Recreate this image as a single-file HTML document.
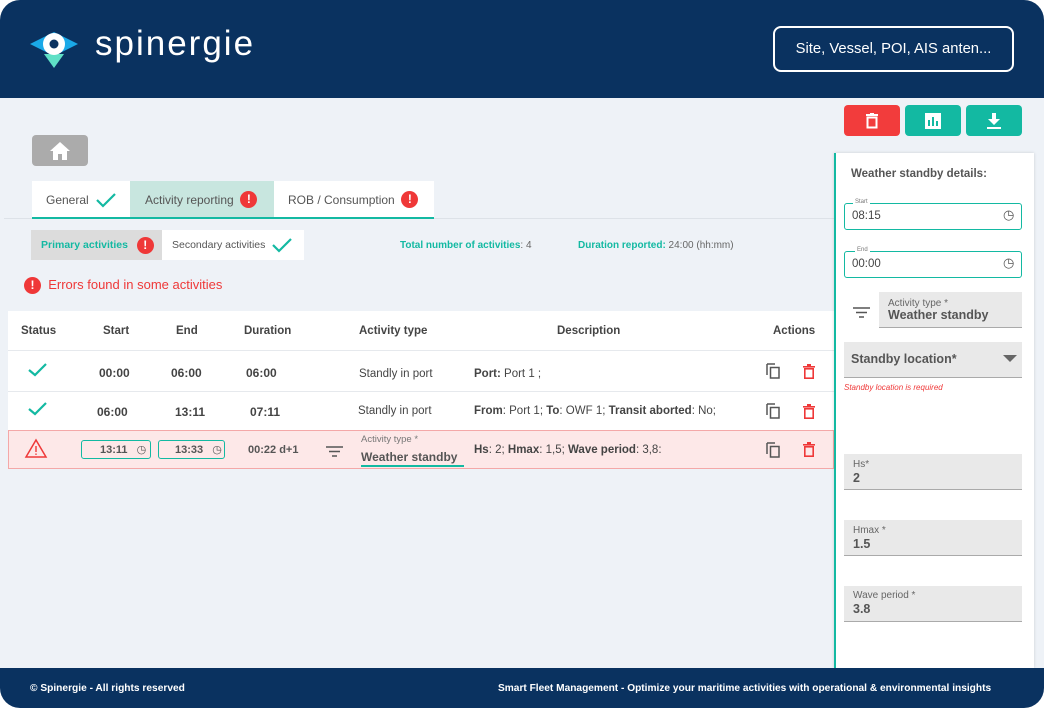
<!DOCTYPE html>
<html><head><meta charset="utf-8">
<style>
*{box-sizing:border-box;margin:0;padding:0}
body{width:1044px;height:708px;background:#fff;font-family:"Liberation Sans",sans-serif;position:relative;overflow:hidden}
.page{position:absolute;left:0;top:0;width:1044px;height:708px;background:#eef2f7;border-radius:20px;overflow:hidden}
.abs{position:absolute}
.hdr{left:0;top:0;width:1044px;height:98px;background:#0a3260}
.ftr{left:0;top:668px;width:1044px;height:40px;background:#0a3260;color:#fff;font-size:10px;font-weight:bold}
.btn{height:31px;border-radius:4px;display:flex;align-items:center;justify-content:center}
.err{display:inline-block;width:17px;height:17px;border-radius:50%;background:#ef3838;color:#fff;font-weight:bold;font-size:12px;text-align:center;line-height:17px;vertical-align:middle}
.ck{display:inline-block;vertical-align:middle}
.tab{top:181px;height:37px;display:flex;align-items:center;font-size:12px;color:#555}
.th{font-size:11.5px;font-weight:bold;color:#444;top:325px}
.c{font-size:12px;color:#444;font-weight:bold}
.n{font-size:11.5px;color:#444}
.field{background:#e9e9e9;border-bottom:1px solid #aaa}
.lbl{font-size:10px;color:#666}
.val{font-size:12.5px;color:#555;font-weight:bold}
</style></head><body>
<div class="page">
<div class="abs hdr">
 <svg class="abs" style="left:28px;top:28px" width="52" height="42" viewBox="0 0 52 42">
  <path d="M2 16 L26 4 L50 16 L26 28 Z" fill="#1aa9e8"/>
  <path d="M16 26 L26 40 L36 26 Z" fill="#5fe0c6"/>
  <circle cx="26" cy="16" r="11" fill="#fff"/>
  <circle cx="26" cy="16" r="4.5" fill="#0a3260"/>
 </svg>
 <div class="abs" style="left:95px;top:24px;color:#fff;font-size:35px;letter-spacing:2px">spinergie</div>
 <div class="abs" style="left:773px;top:26px;width:241px;height:46px;border:2px solid #fff;border-radius:8px;color:#fff;font-size:14.8px;display:flex;align-items:center;justify-content:center">Site, Vessel, POI, AIS anten...</div>
</div>

<div class="abs btn" style="left:844px;top:105px;width:56px;background:#f23c3c"><svg width="14" height="16" viewBox="0 0 14 16"><rect x="1" y="1" width="12" height="2" fill="#fff"/><rect x="5" y="0" width="4" height="2" fill="#fff"/><rect x="2.5" y="4.5" width="9" height="10" fill="none" stroke="#fff" stroke-width="2"/></svg></div>
<div class="abs btn" style="left:905px;top:105px;width:56px;background:#13b9a2"><svg width="16" height="16" viewBox="0 0 16 16"><rect width="16" height="16" fill="#fff"/><rect x="3" y="7" width="2" height="6" fill="#13b9a2"/><rect x="7" y="4" width="2" height="9" fill="#13b9a2"/><rect x="11" y="8" width="2" height="5" fill="#13b9a2"/></svg></div>
<div class="abs btn" style="left:966px;top:105px;width:56px;background:#13b9a2"><svg width="14" height="16" viewBox="0 0 14 16"><path d="M5 0h4v6h4l-6 6-6-6h4z" fill="#fff"/><rect x="0" y="14" width="14" height="2" fill="#fff"/></svg></div>

<div class="abs" style="left:32px;top:135px;width:56px;height:31px;background:#ababab;border-radius:4px;display:flex;align-items:center;justify-content:center">
 <svg width="22" height="20" viewBox="0 0 22 20"><path d="M11 1 L21 10 H18 V19 H13 V13 H9 V19 H4 V10 H1 Z" fill="#fff"/></svg></div>

<div class="abs" style="left:4px;top:218px;width:830px;height:1px;background:#dde2e8"></div>
<div class="abs tab" style="left:32px;width:98px;background:#fff;padding-left:14px">General&nbsp;&nbsp;<svg class="ck" width="22" height="16"><path d="M2 8 L8 14 L20 2" stroke="#13b9a2" stroke-width="2.2" fill="none"/></svg></div>
<div class="abs tab" style="left:130px;width:144px;background:#c8e6df;padding-left:15px">Activity reporting&nbsp;&nbsp;<span class="err">!</span></div>
<div class="abs tab" style="left:274px;width:160px;background:#fff;padding-left:14px">ROB / Consumption&nbsp;&nbsp;<span class="err">!</span></div>
<div class="abs" style="left:32px;top:217px;width:402px;height:2px;background:#13b9a2"></div>

<div class="abs" style="left:31px;top:230px;width:131px;height:30px;background:#dcdcdc;display:flex;align-items:center;padding-left:10px;font-size:10.5px;font-weight:bold;color:#13b9a2">Primary activities&nbsp;&nbsp;&nbsp;<span class="err">!</span></div>
<div class="abs" style="left:162px;top:230px;width:142px;height:30px;background:#fff;display:flex;align-items:center;padding-left:10px;font-size:10.5px;color:#555">Secondary activities&nbsp;&nbsp;<svg class="ck" width="22" height="16"><path d="M2 8 L8 14 L20 2" stroke="#13b9a2" stroke-width="2.2" fill="none"/></svg></div>
<div class="abs" style="left:400px;top:240px;font-size:10px;color:#666"><b style="color:#13b9a2">Total number of activities</b>: 4</div>
<div class="abs" style="left:578px;top:240px;font-size:10px;color:#666"><b style="color:#13b9a2">Duration reported:</b> 24:00 (hh:mm)</div>
<div class="abs" style="left:24px;top:277px;font-size:13px;color:#ef3838"><span class="err">!</span>&nbsp;&nbsp;Errors found in some activities</div>

<div class="abs" style="left:8px;top:311px;width:826px;height:120px;background:#fff"></div>
<div class="abs" style="left:8px;top:350px;width:826px;height:1px;background:#e6e9ed"></div>
<div class="abs" style="left:8px;top:391px;width:826px;height:1px;background:#e6e9ed"></div>
<div class="abs" style="left:8px;top:430px;width:826px;height:39px;background:#fde8e8;border:1px solid #f4a8a8"></div>
<div class="abs th" style="left:21px">Status</div>
<div class="abs th" style="left:103px">Start</div>
<div class="abs th" style="left:176px">End</div>
<div class="abs th" style="left:244px">Duration</div>
<div class="abs th" style="left:359px">Activity type</div>
<div class="abs th" style="left:557px">Description</div>
<div class="abs th" style="left:773px">Actions</div>

<svg class="abs" style="left:28px;top:363px" width="20" height="14"><path d="M1 7 L7 12 L18 1" stroke="#13b9a2" stroke-width="2.2" fill="none"/></svg>
<div class="abs c" style="left:99px;top:366px">00:00</div>
<div class="abs c" style="left:171px;top:366px">06:00</div>
<div class="abs c" style="left:246px;top:366px">06:00</div>
<div class="abs n" style="left:359px;top:368px">Standly in port</div>
<div class="abs n" style="left:474px;top:368px"><b>Port:</b> Port 1 ;</div>

<svg class="abs" style="left:28px;top:402px" width="20" height="14"><path d="M1 7 L7 12 L18 1" stroke="#13b9a2" stroke-width="2.2" fill="none"/></svg>
<div class="abs c" style="left:97px;top:405px">06:00</div>
<div class="abs c" style="left:175px;top:405px">13:11</div>
<div class="abs c" style="left:250px;top:405px">07:11</div>
<div class="abs n" style="left:358px;top:405px">Standly in port</div>
<div class="abs n" style="left:474px;top:405px"><b>From</b>: Port 1; <b>To</b>: OWF 1; <b>Transit aborted</b>: No;</div>

<svg class="abs" style="left:24px;top:438px" width="24" height="21"><path d="M12 2 L22 19 H2 Z" stroke="#ef3838" stroke-width="1.5" fill="none"/><rect x="11.3" y="8" width="1.4" height="6" fill="#ef3838"/><rect x="11.3" y="15.5" width="1.4" height="1.4" fill="#ef3838"/></svg>
<div class="abs" style="left:81px;top:440px;width:70px;height:19px;border:1px solid #13b9a2;border-radius:3px;font-size:11px;font-weight:bold;color:#555;padding:2px 0 0 18px">13:11 <span style="font-weight:normal;margin-left:6px">◷</span></div>
<div class="abs" style="left:158px;top:440px;width:67px;height:19px;border:1px solid #13b9a2;border-radius:3px;font-size:11px;font-weight:bold;color:#555;padding:2px 0 0 16px">13:33 <span style="font-weight:normal;margin-left:6px">◷</span></div>
<div class="abs" style="left:248px;top:444px;font-size:11px;font-weight:bold;color:#555">00:22 d+1</div>
<svg class="abs" style="left:326px;top:446px" width="18" height="12"><path d="M0 1H17M3 5.5H14M6 10H11" stroke="#555" stroke-width="1.4"/></svg>
<div class="abs" style="left:361px;top:434px;font-size:9.5px;color:#777">Activity type *</div>
<div class="abs" style="left:361px;top:450px;font-size:12px;font-weight:bold;color:#555;border-bottom:2px solid #13b9a2;width:103px;padding-bottom:1px">Weather standby</div>
<div class="abs n" style="left:474px;top:444px"><b>Hs</b>: 2; <b>Hmax</b>: 1,5; <b>Wave period</b>: 3,8:</div>

<svg class="abs" style="left:766px;top:363px" width="14" height="16"><path d="M1 1H9" stroke="#555" stroke-width="1.5"/><path d="M1 1V12" stroke="#555" stroke-width="1.5"/><rect x="4.5" y="4.5" width="8.5" height="10.5" fill="none" stroke="#555" stroke-width="1.5"/></svg>
<svg class="abs" style="left:766px;top:403px" width="14" height="16"><path d="M1 1H9" stroke="#555" stroke-width="1.5"/><path d="M1 1V12" stroke="#555" stroke-width="1.5"/><rect x="4.5" y="4.5" width="8.5" height="10.5" fill="none" stroke="#555" stroke-width="1.5"/></svg>
<svg class="abs" style="left:766px;top:442px" width="14" height="16"><path d="M1 1H9" stroke="#555" stroke-width="1.5"/><path d="M1 1V12" stroke="#555" stroke-width="1.5"/><rect x="4.5" y="4.5" width="8.5" height="10.5" fill="none" stroke="#555" stroke-width="1.5"/></svg>
<svg class="abs" style="left:803px;top:364px" width="12" height="15"><rect x="0" y="2" width="12" height="1.6" fill="#ef3838"/><rect x="4" y="0" width="4" height="2" fill="#ef3838"/><rect x="1.8" y="4.8" width="8.4" height="9.4" fill="none" stroke="#ef3838" stroke-width="1.6"/></svg>
<svg class="abs" style="left:803px;top:404px" width="12" height="15"><rect x="0" y="2" width="12" height="1.6" fill="#ef3838"/><rect x="4" y="0" width="4" height="2" fill="#ef3838"/><rect x="1.8" y="4.8" width="8.4" height="9.4" fill="none" stroke="#ef3838" stroke-width="1.6"/></svg>
<svg class="abs" style="left:803px;top:442px" width="12" height="15"><rect x="0" y="2" width="12" height="1.6" fill="#ef3838"/><rect x="4" y="0" width="4" height="2" fill="#ef3838"/><rect x="1.8" y="4.8" width="8.4" height="9.4" fill="none" stroke="#ef3838" stroke-width="1.6"/></svg>

<div class="abs" style="left:834px;top:153px;width:200px;height:515px;background:#fff;border-left:2px solid #13b9a2;box-shadow:0 0 3px rgba(0,0,0,.15)"></div>
<div class="abs" style="left:851px;top:168px;font-size:11.5px;font-weight:bold;color:#555">Weather standby details:</div>
<div class="abs" style="left:844px;top:203px;width:178px;height:27px;border:1.5px solid #13b9a2;border-radius:3px"></div>
<div class="abs" style="left:853px;top:199px;font-size:6px;color:#777;background:#fff;padding:0 2px">Start</div>
<div class="abs" style="left:852px;top:210px;font-size:11.5px;color:#444">08:15</div>
<div class="abs" style="left:1003px;top:207px;font-size:13px;color:#555">◷</div>
<div class="abs" style="left:844px;top:251px;width:178px;height:27px;border:1.5px solid #13b9a2;border-radius:3px"></div>
<div class="abs" style="left:855px;top:247px;font-size:6px;color:#777;background:#fff;padding:0 2px">End</div>
<div class="abs" style="left:852px;top:258px;font-size:11.5px;color:#444">00:00</div>
<div class="abs" style="left:1003px;top:255px;font-size:13px;color:#555">◷</div>
<svg class="abs" style="left:853px;top:307px" width="18" height="12"><path d="M0 1H17M3 5.5H14M6 10H11" stroke="#555" stroke-width="1.4"/></svg>
<div class="abs field" style="left:879px;top:292px;width:143px;height:36px"></div>
<div class="abs lbl" style="left:888px;top:298px">Activity type *</div>
<div class="abs val" style="left:888px;top:308px">Weather standby</div>
<div class="abs field" style="left:844px;top:342px;width:178px;height:36px"></div>
<div class="abs val" style="left:851px;top:352px">Standby location*</div>
<svg class="abs" style="left:1003px;top:355px" width="14" height="7"><path d="M0 0H14L7 7Z" fill="#666"/></svg>
<div class="abs" style="left:844px;top:383px;font-size:8px;color:#ef3838;font-style:italic">Standby location is required</div>
<div class="abs field" style="left:844px;top:454px;width:178px;height:36px"></div>
<div class="abs lbl" style="left:853px;top:459px">Hs*</div>
<div class="abs val" style="left:853px;top:471px">2</div>
<div class="abs field" style="left:844px;top:520px;width:178px;height:36px"></div>
<div class="abs lbl" style="left:853px;top:525px">Hmax *</div>
<div class="abs val" style="left:853px;top:537px">1.5</div>
<div class="abs field" style="left:844px;top:586px;width:178px;height:36px"></div>
<div class="abs lbl" style="left:853px;top:590px">Wave period *</div>
<div class="abs val" style="left:853px;top:602px">3.8</div>

<div class="abs ftr">
 <div class="abs" style="left:30px;top:15px;font-size:10.2px">© Spinergie - All rights reserved</div>
 <div class="abs" style="left:498px;top:14px;font-size:10.5px;white-space:nowrap;transform:scaleX(0.967);transform-origin:left">Smart Fleet Management - Optimize your maritime activities with operational &amp; environmental insights</div>
</div>
</div>
</body></html>
